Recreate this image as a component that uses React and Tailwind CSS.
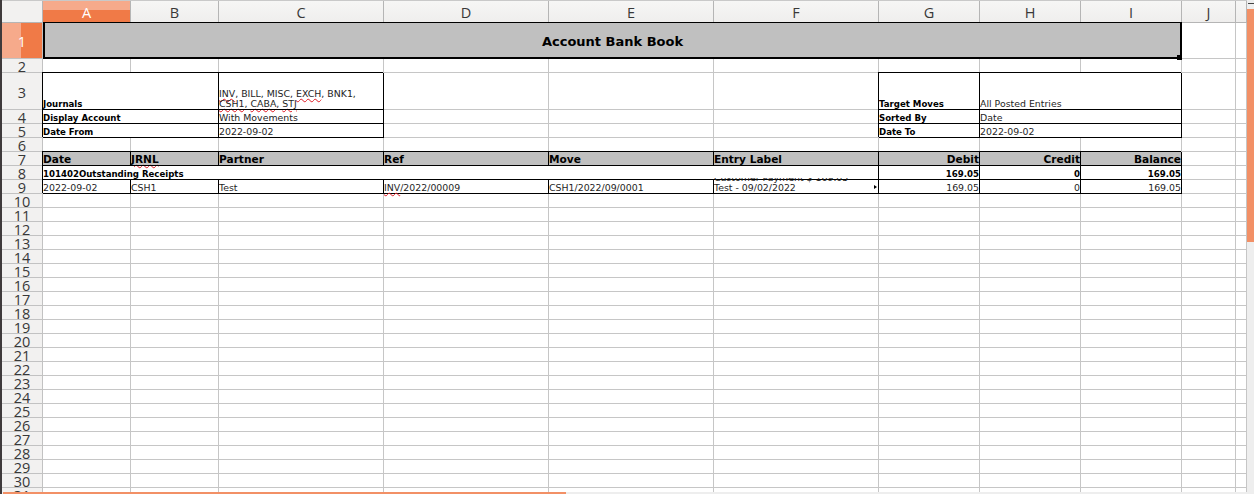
import clsx from "clsx";

// column widths (border pixel included)
const COLS = [
  { key: "A", w: "w-[88px]" },
  { key: "B", w: "w-[88px]" },
  { key: "C", w: "w-[165px]" },
  { key: "D", w: "w-[165px]" },
  { key: "E", w: "w-[165px]" },
  { key: "F", w: "w-[165px]" },
  { key: "G", w: "w-[101px]" },
  { key: "H", w: "w-[101px]" },
  { key: "I", w: "w-[101px]" },
  { key: "J", w: "w-[54px]" },
  { key: "K", w: "w-[11px]" },
];
const W = Object.fromEntries(COLS.map((c) => [c.key, c.w]));

const Cell = ({ w, black, fill, right, className = "", children }) => (
  <div
    className={clsx(
      "shrink-0 h-full border-r border-b flex items-end whitespace-nowrap",
      w,
      black ? "border-black shadow-[-1px_-1px_0_0_#000]" : "border-[#c6c6c6]",
      fill && "bg-[#c0c0c0]",
      right ? "justify-end" : "justify-start",
      className
    )}
  >
    {children}
  </div>
);

const Bold = ({ children }) => (
  <span className="font-bold text-[8.6px] leading-[10px] text-black">{children}</span>
);
const Reg = ({ children }) => (
  <span className="text-[9.4px] leading-[11px] text-[#1e1e1e]">{children}</span>
);
const Head = ({ children }) => (
  <span className="font-bold text-[10.6px] leading-[12px] text-black">{children}</span>
);
const Sp = ({ children }) => (
  <span className="underline decoration-wavy decoration-[#e01b24] decoration-[0.5px] underline-offset-[1px]">
    {children}
  </span>
);

const RowHead = ({ n, active }) => (
  <div
    className={clsx(
      "shrink-0 w-[41px] h-full border-r border-b border-[#c2c2c2] flex items-center justify-center pt-[3px] text-[14.5px] leading-[10px] font-['Open_Sans',sans-serif]",
      active
        ? "bg-[linear-gradient(to_right,#f6aa8b_48%,#f07a47_48%)] text-white"
        : "bg-[#f2f1f0] text-[#383838]"
    )}
  >
    {n}
  </div>
);

const Row = ({ n, h, active, children }) => (
  <div className={clsx("flex shrink-0", h)}>
    <RowHead n={n} active={active} />
    {children}
  </div>
);

const Empty = ({ keys }) => keys.map((k) => <Cell key={k} w={W[k]} />);

export default function App() {
  const tail = ["J", "K"];
  return (
    <div className="w-[1254px] h-[494px] overflow-hidden flex bg-white font-['DejaVu_Sans',sans-serif]">
      <div className="w-[2px] h-full bg-[#3f3a3b] shrink-0" />

      <div className="w-[1245px] h-full flex flex-col shrink-0">
        <div className="h-[492px] overflow-hidden flex flex-col">
          {/* column header */}
          <div className="flex shrink-0 h-[23px] border-t border-[#c9c9c9]">
            <div className="shrink-0 w-[41px] h-full border-r border-b border-[#b5b5b5] bg-[#f2f1f0]" />
            {COLS.map((c, i) => (
              <div
                key={c.key}
                className={clsx(
                  "shrink-0 h-full border-r border-b border-[#b5b5b5] flex items-center justify-center pt-[3px] text-[14.5px] leading-none font-['Open_Sans',sans-serif]",
                  c.w,
                  i === 0
                    ? "bg-[linear-gradient(to_bottom,#f6aa8b_45%,#f07a47_45%)] text-white"
                    : "bg-[linear-gradient(to_bottom,#f6f6f5,#efeeed)] text-[#383838]"
                )}
              >
                {c.key === "K" ? "" : c.key}
              </div>
            ))}
          </div>

          {/* 1 */}
          <Row n={1} h="h-[36px]" active>
            <div className="relative shrink-0 w-[1139px] h-full bg-[#c0c0c0] border-l-2 border-r-2 border-b-2 border-black shadow-[0_-1px_0_0_#000] flex items-center justify-center pt-[3px]">
              <span className="font-bold text-[13px] text-black">Account Bank Book</span>
              <div className="absolute -right-[2px] -bottom-[3px] w-[5px] h-[5px] bg-black z-10" />
            </div>
            <Empty keys={tail} />
          </Row>

          {/* 2 */}
          <Row n={2} h="h-[14px]">
            <Empty keys={COLS.map((c) => c.key)} />
          </Row>

          {/* 3 */}
          <Row n={3} h="h-[37px]">
            <Cell w="w-[176px]" black>
              <Bold>Journals</Bold>
            </Cell>
            <Cell w={W.C} black>
              <span className="text-[9.4px] leading-[10px] text-[#1e1e1e]">
                <Sp>INV</Sp>, BILL, MISC, <Sp>EXCH</Sp>, BNK1,
                <br />
                <Sp>CSH1</Sp>, <Sp>CABA</Sp>, <Sp>STJ</Sp>
              </span>
            </Cell>
            <Empty keys={["D", "E", "F"]} />
            <Cell w={W.G} black>
              <Bold>Target Moves</Bold>
            </Cell>
            <Cell w="w-[202px]" black>
              <Reg>All Posted Entries</Reg>
            </Cell>
            <Empty keys={tail} />
          </Row>

          {/* 4 */}
          <Row n={4} h="h-[14px]">
            <Cell w="w-[176px]" black>
              <Bold>Display Account</Bold>
            </Cell>
            <Cell w={W.C} black>
              <Reg>With Movements</Reg>
            </Cell>
            <Empty keys={["D", "E", "F"]} />
            <Cell w={W.G} black>
              <Bold>Sorted By</Bold>
            </Cell>
            <Cell w="w-[202px]" black>
              <Reg>Date</Reg>
            </Cell>
            <Empty keys={tail} />
          </Row>

          {/* 5 */}
          <Row n={5} h="h-[14px]">
            <Cell w="w-[176px]" black>
              <Bold>Date From</Bold>
            </Cell>
            <Cell w={W.C} black>
              <Reg>2022-09-02</Reg>
            </Cell>
            <Empty keys={["D", "E", "F"]} />
            <Cell w={W.G} black>
              <Bold>Date To</Bold>
            </Cell>
            <Cell w="w-[202px]" black>
              <Reg>2022-09-02</Reg>
            </Cell>
            <Empty keys={tail} />
          </Row>

          {/* 6 */}
          <Row n={6} h="h-[14px]">
            <Empty keys={COLS.map((c) => c.key)} />
          </Row>

          {/* 7 header */}
          <Row n={7} h="h-[14px]">
            <Cell w={W.A} black fill><Head>Date</Head></Cell>
            <Cell w={W.B} black fill><Head><Sp>JRNL</Sp></Head></Cell>
            <Cell w={W.C} black fill><Head>Partner</Head></Cell>
            <Cell w={W.D} black fill><Head>Ref</Head></Cell>
            <Cell w={W.E} black fill><Head>Move</Head></Cell>
            <Cell w={W.F} black fill><Head>Entry Label</Head></Cell>
            <Cell w={W.G} black fill right><Head>Debit</Head></Cell>
            <Cell w={W.H} black fill right><Head>Credit</Head></Cell>
            <Cell w={W.I} black fill right><Head>Balance</Head></Cell>
            <Empty keys={tail} />
          </Row>

          {/* 8 */}
          <Row n={8} h="h-[14px]">
            <Cell w="w-[836px]" black>
              <Bold>101402Outstanding Receipts</Bold>
            </Cell>
            <Cell w={W.G} black right><Bold>169.05</Bold></Cell>
            <Cell w={W.H} black right><Bold>0</Bold></Cell>
            <Cell w={W.I} black right><Bold>169.05</Bold></Cell>
            <Empty keys={tail} />
          </Row>

          {/* 9 */}
          <Row n={9} h="h-[14px]">
            <Cell w={W.A} black><Reg>2022-09-02</Reg></Cell>
            <Cell w={W.B} black><Reg>CSH1</Reg></Cell>
            <Cell w={W.C} black><Reg>Test</Reg></Cell>
            <Cell w={W.D} black><Reg><Sp>INV</Sp>/2022/00009</Reg></Cell>
            <Cell w={W.E} black><Reg>CSH1/2022/09/0001</Reg></Cell>
            <Cell w={W.F} black className="relative">
              <div className="absolute inset-x-0 bottom-0 h-[15px] overflow-hidden flex flex-col justify-end z-10">
                <span className="text-[9.4px] leading-[10px] text-[#1e1e1e]">
                  Customer Payment $ 169.05
                  <br />
                  Test - 09/02/2022
                </span>
              </div>
              <div className="absolute right-[1px] top-[5px] w-0 h-0 border-y-[2px] border-y-transparent border-l-[3px] border-l-black" />
            </Cell>
            <Cell w={W.G} black right><Reg>169.05</Reg></Cell>
            <Cell w={W.H} black right><Reg>0</Reg></Cell>
            <Cell w={W.I} black right><Reg>169.05</Reg></Cell>
            <Empty keys={tail} />
          </Row>

          {Array.from({ length: 22 }, (_, i) => i + 10).map((n) => (
            <Row key={n} n={n} h="h-[14px]">
              <Empty keys={COLS.map((c) => c.key)} />
            </Row>
          ))}
        </div>

        {/* horizontal scrollbar */}
        <div className="h-[2px] flex bg-[#eeeeee]">
          <div className="ml-[1px] w-[563px] h-full bg-[#f29066]" />
        </div>
      </div>

      {/* vertical scrollbar */}
      <div className="w-[7px] h-full shrink-0 flex flex-col bg-[#eeeeee]">
        <div className="h-[9px] flex items-start pt-[3px] justify-center">
          <div className="w-[6px] h-px bg-[#444]" />
        </div>
        <div className="h-[233px] bg-[#f29066]" />
      </div>
    </div>
  );
}
